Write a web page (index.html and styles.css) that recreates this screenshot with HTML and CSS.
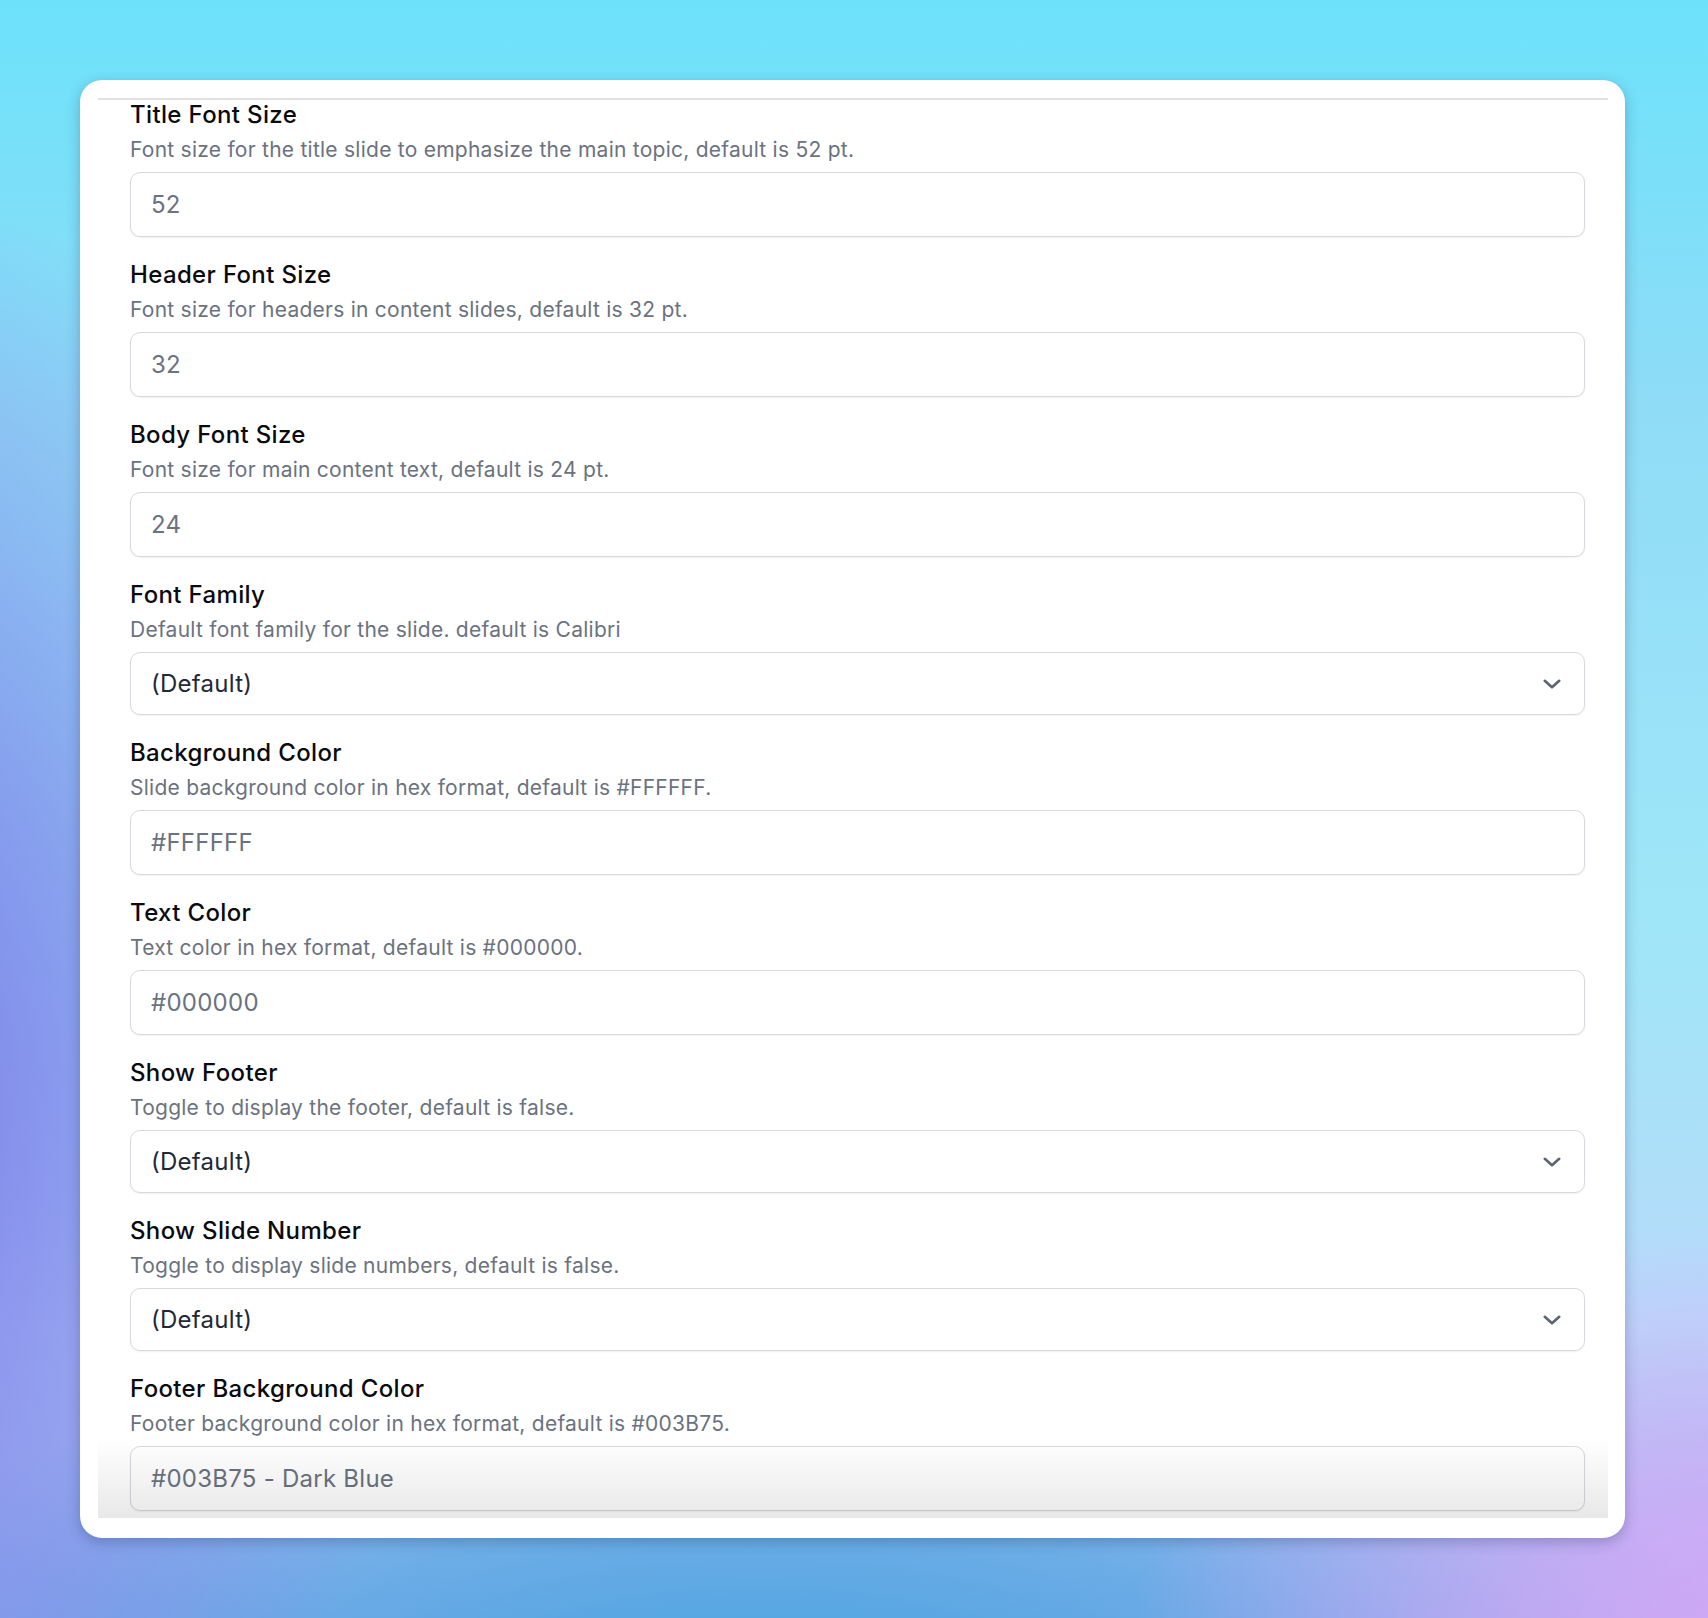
FILE: index.html
```html
<html lang="en">
<head>
    <meta charset="UTF-8">
    <meta name="viewport" content="width=device-width, initial-scale=1.0">
    <title>Slide settings</title>
    <link rel="stylesheet" href="styles.css">
</head>
<body>
    <div class="card">
        <div class="panel">
            <div class="field">
                <label class="field-label">Title Font Size</label>
                <p class="field-hint">Font size for the title slide to emphasize the main topic, default is 52 pt.</p>
                <input class="field-input" type="text" value="52" readonly>
            </div>
            <div class="field">
                <label class="field-label">Header Font Size</label>
                <p class="field-hint">Font size for headers in content slides, default is 32 pt.</p>
                <input class="field-input" type="text" value="32" readonly>
            </div>
            <div class="field">
                <label class="field-label">Body Font Size</label>
                <p class="field-hint">Font size for main content text, default is 24 pt.</p>
                <input class="field-input" type="text" value="24" readonly>
            </div>
            <div class="field">
                <label class="field-label">Font Family</label>
                <p class="field-hint">Default font family for the slide. default is Calibri</p>
                <div class="field-select">
                    <span>(Default)</span>
                    <svg class="chevron" viewBox="0 0 18 10" width="18" height="10"><path d="M1.8 1.8 L9 8.2 L16.2 1.8" fill="none" stroke="#5d6470" stroke-width="2.6" stroke-linecap="round" stroke-linejoin="round"/></svg>
                </div>
            </div>
            <div class="field">
                <label class="field-label">Background Color</label>
                <p class="field-hint">Slide background color in hex format, default is #FFFFFF.</p>
                <input class="field-input" type="text" value="#FFFFFF" readonly>
            </div>
            <div class="field">
                <label class="field-label">Text Color</label>
                <p class="field-hint">Text color in hex format, default is #000000.</p>
                <input class="field-input" type="text" value="#000000" readonly>
            </div>
            <div class="field">
                <label class="field-label">Show Footer</label>
                <p class="field-hint">Toggle to display the footer, default is false.</p>
                <div class="field-select">
                    <span>(Default)</span>
                    <svg class="chevron" viewBox="0 0 18 10" width="18" height="10"><path d="M1.8 1.8 L9 8.2 L16.2 1.8" fill="none" stroke="#5d6470" stroke-width="2.6" stroke-linecap="round" stroke-linejoin="round"/></svg>
                </div>
            </div>
            <div class="field">
                <label class="field-label">Show Slide Number</label>
                <p class="field-hint">Toggle to display slide numbers, default is false.</p>
                <div class="field-select">
                    <span>(Default)</span>
                    <svg class="chevron" viewBox="0 0 18 10" width="18" height="10"><path d="M1.8 1.8 L9 8.2 L16.2 1.8" fill="none" stroke="#5d6470" stroke-width="2.6" stroke-linecap="round" stroke-linejoin="round"/></svg>
                </div>
            </div>
            <div class="field">
                <label class="field-label">Footer Background Color</label>
                <p class="field-hint">Footer background color in hex format, default is #003B75.</p>
                <input class="field-input" type="text" value="#003B75 - Dark Blue" readonly>
            </div>
        </div>
    </div>
</body>
</html>
```

FILE: styles.css
```css
/* Page background */
body {
    margin: 0;
    height: 1618px;
    overflow: hidden;
    font-family: Inter, "Noto Sans", sans-serif;
    background:
        radial-gradient(ellipse 620px 900px at -160px 1080px, rgba(122, 120, 232, 1) 0%, rgba(122, 120, 232, 0.6) 45%, rgba(122, 120, 232, 0) 100%),
        radial-gradient(ellipse 680px 460px at 1800px 1680px, rgba(214, 166, 246, 1) 0%, rgba(214, 166, 246, 0.7) 40%, rgba(214, 166, 246, 0) 100%),
        radial-gradient(ellipse 1000px 360px at 760px 1700px, rgba(72, 164, 224, 1) 0%, rgba(72, 164, 224, 0.6) 50%, rgba(72, 164, 224, 0) 100%),
        linear-gradient(180deg, #6ce2fa 0%, #8fdcf7 25%, #a0e6f8 58%, #b8dafa 82%, #9cb2ee 100%);
}

.card {
    margin: 80px 0 0 80px;
    width: 1545px;
    padding: 18px 17px 20px 18px;
    box-sizing: border-box;
    background: #fff;
    border-radius: 22px;
    box-shadow: 0 4px 14px rgba(20, 40, 80, 0.28);
}

.panel {
    position: relative;
    height: 1418px;
    overflow: hidden;
    border-top: 2px solid #e2e2e4;
    padding: 0 23px 0 32px;
}

/* fade at the bottom of the scroll area */
.panel::after {
    content: "";
    position: absolute;
    left: 0;
    right: 0;
    bottom: 0;
    height: 80px;
    background: linear-gradient(180deg, rgba(0, 0, 0, 0) 0%, rgba(0, 0, 0, 0.09) 100%);
}

.field {
    display: flex;
    flex-direction: column;
    margin-bottom: 23px;
}

.field-label {
    font-size: 24px;
    line-height: 30px;
    font-weight: 500;
    letter-spacing: 0.35px;
    color: #0b0b0f;
}

.field-hint {
    margin: 6px 0 0;
    font-size: 21px;
    line-height: 28px;
    letter-spacing: 0.25px;
    color: #6b7280;
}

.field-input {
    margin-top: 8px;
    height: 65px;
    box-sizing: border-box;
    padding: 0 20px;
    border: 1.5px solid #d8d9df;
    border-radius: 10px;
    box-shadow: 0 1px 2px rgba(0, 0, 0, 0.06);
    font-family: inherit;
    font-size: 24px;
    letter-spacing: 0.25px;
    color: #6b7280;
    background: #fff;
    outline: none;
}

.field-select {
    margin-top: 8px;
    height: 63px;
    box-sizing: border-box;
    padding: 0 23px 0 20px;
    display: flex;
    align-items: center;
    justify-content: space-between;
    border: 1.5px solid #d8d9df;
    border-radius: 10px;
    box-shadow: 0 1px 2px rgba(0, 0, 0, 0.06);
    font-size: 24px;
    letter-spacing: 0.25px;
    color: #1f2937;
}
```
